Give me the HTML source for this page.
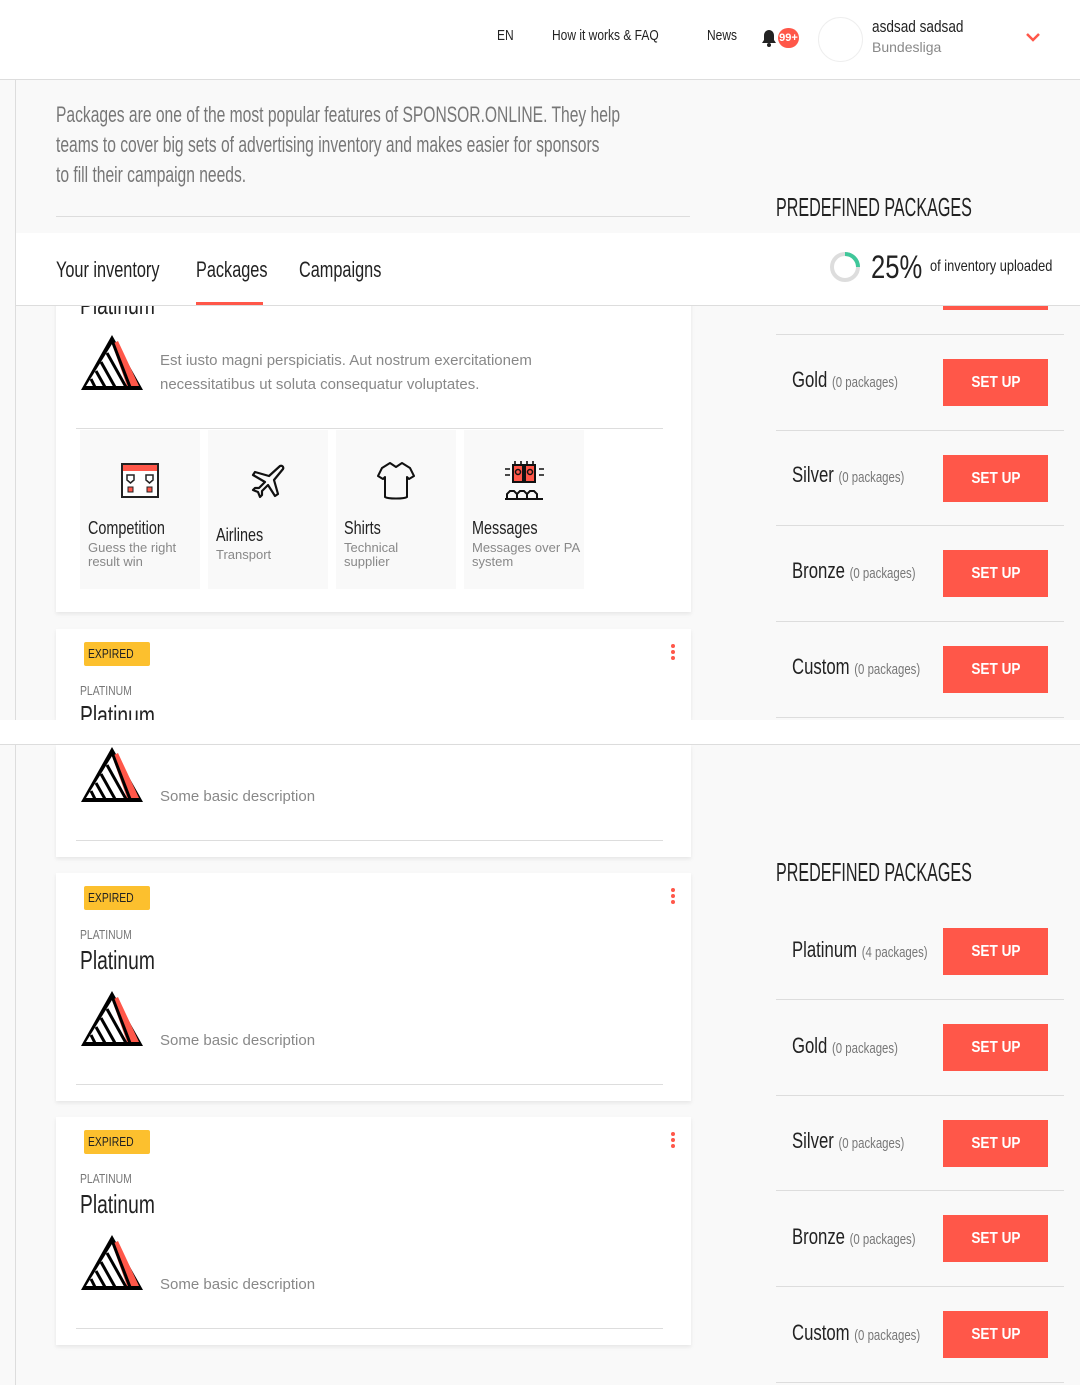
<!DOCTYPE html>
<html><head><meta charset="utf-8"><style>
*{margin:0;padding:0;box-sizing:border-box}
body{width:1080px;height:1385px;position:relative;background:#f9f9f9;font-family:"Liberation Sans",sans-serif;overflow:hidden;color:#222}
.a{position:absolute;white-space:nowrap}
.c{display:inline-block;transform:scaleX(.8);transform-origin:left center}
.hd{position:absolute;left:0;top:0;width:1080px;height:80px;background:#fff;border-bottom:1px solid #ddd}
.card{position:absolute;left:56px;width:635px;background:#fff;box-shadow:0 2px 4px rgba(0,0,0,.08)}
.desc{font-size:15px;color:#888;line-height:24px}
.hr{position:absolute;height:1px;background:#ddd}
.tile{position:absolute;top:430px;width:120px;height:159px;background:#f9f9f9}
.tile .t{position:absolute;left:8px;top:88px;font-size:18px;color:#222}
.tile .s{position:absolute;left:8px;font-size:13px;color:#888;line-height:14px;white-space:normal;width:100px}
.btn{position:absolute;left:943px;width:105px;height:47px;background:#ff5749;color:#fff;font-weight:bold;font-size:16px;text-align:center;line-height:47px}
.btn span{display:inline-block;transform:scaleX(.85)}
.nm{position:absolute;left:792px;font-size:22px;color:#222;white-space:nowrap}
.nm .c{transform:scaleX(.76)}
.nm small{font-size:15px;color:#777}
.exp{position:absolute;width:66px;height:24px;background:#fcc02e;font-size:13px;color:#222;text-align:center;line-height:24px;border-radius:2px}
.dots{position:absolute;width:4px}
.dots i{display:block;width:4px;height:4px;border-radius:2px;background:#ff5749;margin-bottom:2px}
.ph{position:absolute;left:776px;font-size:26px;color:#222;white-space:nowrap}
.ph .c{transform:scaleX(.62)}
.tab .c{transform:scaleX(.74)}
</style></head><body>
<svg width="0" height="0" style="position:absolute"><defs>
<g id="tri"><polygon points="31,0 0,55 62,55" fill="#000"/><polygon points="31,9 5,51 57,51" fill="#fff"/><polygon points="31,9 37,6 58,51 46,51" fill="#ff5749"/><g stroke="#000" stroke-width="3"><line x1="26" y1="18" x2="45" y2="52"/><line x1="20" y1="27" x2="34" y2="52"/><line x1="15" y1="36" x2="24" y2="52"/><line x1="10" y1="44" x2="14" y2="52"/><line x1="32" y1="8" x2="49" y2="52"/></g></g>
</defs></svg>

<div class="hd"></div>
<div class="a" style="left:497px;top:27px;font-size:15px"><span class="c">EN</span></div>
<div class="a" style="left:552px;top:27px;font-size:15px"><span class="c">How it works &amp; FAQ</span></div>
<div class="a" style="left:707px;top:27px;font-size:15px"><span class="c">News</span></div>
<svg class="a" style="left:761px;top:29px" width="16" height="18" viewBox="0 0 16 18"><path d="M8 1c-3 0-5 2.5-5 5.5v4.5L1 14h14l-2-3V6.5C13 3.5 11 1 8 1z" fill="#222"/><circle cx="8" cy="16" r="2" fill="#222"/></svg>
<div class="a" style="left:778px;top:28px;width:21px;height:20px;border-radius:10px;background:#ff5749;color:#fff;font-size:11px;font-weight:bold;text-align:center;line-height:20px">99+</div>
<div class="a" style="left:818px;top:17px;width:45px;height:45px;border-radius:50%;border:1px solid #eee"></div>
<div class="a" style="left:872px;top:17px;font-size:17px"><span class="c">asdsad sadsad</span></div>
<div class="a" style="left:872px;top:39px;font-size:14px;color:#888">Bundesliga</div>
<svg class="a" style="left:1025px;top:32px" width="16" height="10"><path d="M2 2l6 6 6-6" stroke="#ff5749" stroke-width="2.5" fill="none"/></svg>

<div class="a" style="left:15px;top:80px;width:1px;height:640px;background:#ddd"></div>
<div class="a" style="left:56px;top:100px;font-size:22px;color:#777;line-height:30px"><span class="c" style="transform:scaleX(.71)">Packages are one of the most popular features of SPONSOR.ONLINE. They help<br>teams to cover big sets of advertising inventory and makes easier for sponsors<br>to fill their campaign needs.</span></div>
<div class="hr" style="left:56px;top:216px;width:634px"></div>
<div class="ph" style="top:192px"><span class="c">PREDEFINED PACKAGES</span></div>

<!-- right list top -->
<div class="btn" style="top:263px;height:47px"></div>
<div class="hr" style="left:776px;top:334px;width:288px"></div>
<div class="nm" style="top:367px"><span class="c">Gold <small>(0 packages)</small></span></div><div class="btn" style="top:359px"><span>SET UP</span></div>
<div class="hr" style="left:776px;top:430px;width:288px"></div>
<div class="nm" style="top:462px"><span class="c">Silver <small>(0 packages)</small></span></div><div class="btn" style="top:455px"><span>SET UP</span></div>
<div class="hr" style="left:776px;top:525px;width:288px"></div>
<div class="nm" style="top:558px"><span class="c">Bronze <small>(0 packages)</small></span></div><div class="btn" style="top:550px"><span>SET UP</span></div>
<div class="hr" style="left:776px;top:621px;width:288px"></div>
<div class="nm" style="top:654px"><span class="c">Custom <small>(0 packages)</small></span></div><div class="btn" style="top:646px"><span>SET UP</span></div>
<div class="hr" style="left:776px;top:717px;width:288px"></div>

<!-- card 1 -->
<div class="card" style="top:290px;height:322px"></div>
<div class="a" style="left:80px;top:290px;font-size:26px"><span class="c" style="transform:scaleX(.74)">Platinum</span></div>
<svg class="a" style="left:81px;top:335px" width="62" height="56"><use href="#tri"/></svg>
<div class="a desc" style="left:160px;top:349px">Est iusto magni perspiciatis. Aut nostrum exercitationem<br>necessitatibus ut soluta consequatur voluptates.</div>
<div class="hr" style="left:76px;top:428px;width:587px"></div>
<div class="tile" style="left:80px"><svg class="a" style="left:41px;top:33px" width="38" height="35"><rect x="1" y="1" width="36" height="33" fill="#fff" stroke="#222" stroke-width="2"/><rect x="2" y="2" width="34" height="6" fill="#ff5749"/><path d="M6 12h7v5l-3.5 3-3.5-3z M25 12h7v5l-3.5 3-3.5-3z" fill="none" stroke="#222" stroke-width="1.5"/><rect x="7" y="24" width="5" height="5" fill="#ff5749" stroke="#222"/><rect x="26" y="24" width="5" height="5" fill="#ff5749" stroke="#222"/></svg><div class="t"><span class="c">Competition</span></div><div class="s" style="top:111px">Guess the right result win</div></div>
<div class="tile" style="left:208px"><svg class="a" style="left:42px;top:33px" width="36" height="36" viewBox="0 0 36 36"><path d="M30 3c2-1 4 1 3 3L24 17l4 14-3 2-7-11-6 6v4l-2 2-2-5-5-2 2-2h4l6-6L3 12l2-3 14 4z" fill="none" stroke="#111" stroke-width="2.2" stroke-linejoin="round"/></svg><div class="t" style="top:95px"><span class="c">Airlines</span></div><div class="s" style="top:118px">Transport</div></div>
<div class="tile" style="left:336px"><svg class="a" style="left:40px;top:30px" width="40" height="40" viewBox="0 0 40 40"><path d="M14 3l6 4 6-4 8 5 4 8-5 3-2-2v20c-3 2-19 2-22 0V17l-2 2-5-3 4-8z" fill="none" stroke="#111" stroke-width="2" stroke-linejoin="round"/></svg><div class="t"><span class="c">Shirts</span></div><div class="s" style="top:111px;width:80px">Technical supplier</div></div>
<div class="tile" style="left:464px"><svg class="a" style="left:39px;top:31px" width="42" height="40" viewBox="0 0 42 40"><rect x="10" y="4" width="10" height="17" fill="#ff5749" stroke="#111" stroke-width="2"/><rect x="22" y="4" width="10" height="17" fill="#ff5749" stroke="#111" stroke-width="2"/><circle cx="15" cy="11" r="2.5" fill="none" stroke="#111" stroke-width="1.5"/><circle cx="27" cy="11" r="2.5" fill="none" stroke="#111" stroke-width="1.5"/><path d="M12 4V0M18 4V0M24 4V0M30 4V0M2 8h5M2 14h5M36 8h5M36 14h5" stroke="#111" stroke-width="1.6"/><path d="M4 37v-4l3-3h4l3 3v4M14 37v-4l3-3h4l3 3v4M24 37v-4l3-3h4l3 3v4M2 38h38" fill="none" stroke="#111" stroke-width="2"/></svg><div class="t"><span class="c">Messages</span></div><div class="s" style="top:111px;width:112px">Messages over PA system</div></div>

<!-- tabs bar -->
<div class="a" style="left:16px;top:233px;width:1064px;height:73px;background:#fff;border-bottom:1px solid #ddd"></div>
<div class="a tab" style="left:56px;top:257px;font-size:22px"><span class="c">Your inventory</span></div>
<div class="a tab" style="left:196px;top:257px;font-size:22px"><span class="c">Packages</span></div>
<div class="a tab" style="left:299px;top:257px;font-size:22px"><span class="c">Campaigns</span></div>
<div class="a" style="left:196px;top:302px;width:67px;height:3px;background:#ff5749"></div>
<svg class="a" style="left:829px;top:251px" width="32" height="32"><circle cx="16" cy="16" r="13" fill="none" stroke="#ddd" stroke-width="4"/><path d="M16 3a13 13 0 0 1 13 13" fill="none" stroke="#3fc79a" stroke-width="4"/></svg>
<div class="a" style="left:871px;top:249px;font-size:32px"><span class="c">25%</span></div>
<div class="a" style="left:930px;top:258px;font-size:16px"><span class="c">of inventory uploaded</span></div>

<!-- card 2 (cut) -->
<div class="card" style="top:629px;height:91px"></div>
<div class="exp" style="left:84px;top:642px"><span class="c">EXPIRED</span></div>
<div class="dots" style="left:671px;top:644px"><i></i><i></i><i></i></div>
<div class="a" style="left:80px;top:683px;font-size:13px;color:#777"><span class="c">PLATINUM</span></div>
<div class="a" style="left:80px;top:700px;font-size:26px;height:20px;overflow:hidden"><span class="c" style="transform:scaleX(.74)">Platinum</span></div>

<!-- white band -->
<div class="a" style="left:0;top:720px;width:1080px;height:25px;background:#fff;border-bottom:1px solid #ddd"></div>
<div class="a" style="left:15px;top:745px;width:1px;height:640px;background:#ddd"></div>

<!-- bottom cards -->
<div class="card" style="top:745px;height:112px"></div>
<svg class="a" style="left:81px;top:747px" width="62" height="56"><use href="#tri"/></svg>
<div class="a desc" style="left:160px;top:785px">Some basic description</div>
<div class="hr" style="left:76px;top:840px;width:587px"></div>

<div class="card" style="top:873px;height:228px"></div>
<div class="exp" style="left:84px;top:886px"><span class="c">EXPIRED</span></div>
<div class="dots" style="left:671px;top:888px"><i></i><i></i><i></i></div>
<div class="a" style="left:80px;top:927px;font-size:13px;color:#777"><span class="c">PLATINUM</span></div>
<div class="a" style="left:80px;top:945px;font-size:26px"><span class="c" style="transform:scaleX(.74)">Platinum</span></div>
<svg class="a" style="left:81px;top:991px" width="62" height="56"><use href="#tri"/></svg>
<div class="a desc" style="left:160px;top:1029px">Some basic description</div>
<div class="hr" style="left:76px;top:1084px;width:587px"></div>

<div class="card" style="top:1117px;height:228px"></div>
<div class="exp" style="left:84px;top:1130px"><span class="c">EXPIRED</span></div>
<div class="dots" style="left:671px;top:1132px"><i></i><i></i><i></i></div>
<div class="a" style="left:80px;top:1171px;font-size:13px;color:#777"><span class="c">PLATINUM</span></div>
<div class="a" style="left:80px;top:1189px;font-size:26px"><span class="c" style="transform:scaleX(.74)">Platinum</span></div>
<svg class="a" style="left:81px;top:1235px" width="62" height="56"><use href="#tri"/></svg>
<div class="a desc" style="left:160px;top:1273px">Some basic description</div>
<div class="hr" style="left:76px;top:1328px;width:587px"></div>

<!-- right list bottom -->
<div class="ph" style="top:857px"><span class="c">PREDEFINED PACKAGES</span></div>
<div class="nm" style="top:937px"><span class="c">Platinum <small>(4 packages)</small></span></div><div class="btn" style="top:928px"><span>SET UP</span></div>
<div class="hr" style="left:776px;top:999px;width:288px"></div>
<div class="nm" style="top:1033px"><span class="c">Gold <small>(0 packages)</small></span></div><div class="btn" style="top:1024px"><span>SET UP</span></div>
<div class="hr" style="left:776px;top:1095px;width:288px"></div>
<div class="nm" style="top:1128px"><span class="c">Silver <small>(0 packages)</small></span></div><div class="btn" style="top:1120px"><span>SET UP</span></div>
<div class="hr" style="left:776px;top:1190px;width:288px"></div>
<div class="nm" style="top:1224px"><span class="c">Bronze <small>(0 packages)</small></span></div><div class="btn" style="top:1215px"><span>SET UP</span></div>
<div class="hr" style="left:776px;top:1286px;width:288px"></div>
<div class="nm" style="top:1320px"><span class="c">Custom <small>(0 packages)</small></span></div><div class="btn" style="top:1311px"><span>SET UP</span></div>
<div class="hr" style="left:776px;top:1382px;width:288px"></div>
</body></html>
